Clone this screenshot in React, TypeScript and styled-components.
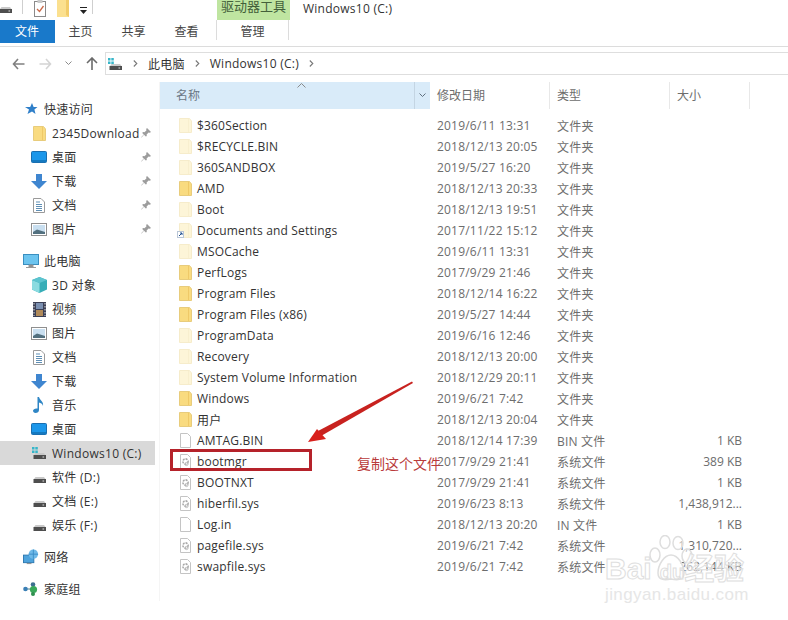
import styled, { createGlobalStyle } from 'styled-components';

const GlobalStyle = createGlobalStyle`
  html, body { margin: 0; padding: 0; background: #fff; }
  body {
    font-family: 'Open Sans', 'Noto Sans CJK SC', sans-serif;
    font-size: 12px;
    color: #333;
  }
`;

const FolderIcon = ({ pale }: { pale?: boolean }) => (
  <svg width="13" height="15" viewBox="0 0 13 15">
    <path d="M0.5 0.5H10.5L12.5 3V14.5H0.5Z" fill={pale ? '#fdf5d8' : '#f9db80'} stroke={pale ? '#f6eccb' : '#e8cc7c'} />
    <path d="M9.5 1V14" stroke={pale ? '#f8efcf' : '#efc968'} />
  </svg>
);

const QuickFolder = () => (
  <svg width="12" height="17" viewBox="0 0 12 17">
    <path d="M0 0H12V17H0Z" fill="#fbe08f" />
    <path d="M9 0V15L12 17V0Z" fill="#f2cc6a" />
  </svg>
);

const PageIcon = ({ gear }: { gear?: boolean }) => (
  <svg width="13" height="15" viewBox="0 0 13 15">
    <path d="M1.5 0.5H8.5L11.5 3.5V14.5H1.5Z" fill="#fff" stroke="#c4c4c4" />
    {gear && <circle cx="6.5" cy="7.5" r="2.6" fill="none" stroke="#a9a9a9" strokeWidth="1.6" strokeDasharray="2 1" />}
    {gear && <circle cx="7.5" cy="10" r="1.6" fill="none" stroke="#bbb" />}
  </svg>
);

const DriveIcon = ({ win }: { win?: boolean }) => (
  <svg width="15" height="14" viewBox="0 0 15 14">
    {win && (
      <g fill="#36b6c9">
        <rect x="0" y="1" width="2.5" height="2.5" />
        <rect x="3.3" y="1" width="2.5" height="2.5" />
        <rect x="0" y="4.5" width="2.5" height="2.5" />
        <rect x="3.3" y="4.5" width="2.5" height="2.5" />
      </g>
    )}
    <path d="M2 9L3.5 7H12L13.5 9Z" fill="#c9c9c9" />
    <rect x="1.5" y="9" width="12.5" height="4" fill="#4e4e4e" />
    <rect x="10.5" y="10.5" width="1.6" height="1" fill="#ddd" />
  </svg>
);

const StarIcon = () => (
  <svg width="14" height="14" viewBox="0 0 14 14">
    <path d="M8 1L9.6 5H13.5L10.4 7.6L11.5 12L8 9.5L3.5 12L5 7.6L1 5H6.2Z" fill="#2f7fc9" />
  </svg>
);

const DesktopIcon = () => (
  <svg width="16" height="12" viewBox="0 0 16 12">
    <rect x="0.5" y="0.5" width="15" height="11" rx="1" fill="#1c97ea" stroke="#1a6fb0" />
    <path d="M1 10H15" stroke="#0f5c96" />
  </svg>
);

const DownloadIcon = () => (
  <svg width="16" height="15" viewBox="0 0 16 15">
    <path d="M5 0H11V7H16L8 15L0 7H5Z" fill="#3f86d0" />
  </svg>
);

const DocIcon = () => (
  <svg width="12" height="15" viewBox="0 0 12 15">
    <path d="M0.5 0.5H8L11.5 4V14.5H0.5Z" fill="#fff" stroke="#9a9a9a" />
    <path d="M3 4H7M3 6.5H9M3 8.5H9M3 10.5H9M3 12.5H9" stroke="#5f8fb5" />
  </svg>
);

const PictureIcon = () => (
  <svg width="16" height="13" viewBox="0 0 16 13">
    <rect x="0.5" y="0.5" width="15" height="12" fill="#fff" stroke="#8f8f8f" />
    <rect x="2" y="2" width="12" height="9" fill="#c9dff0" />
    <path d="M2 9L6 6.5L14 9V11H2Z" fill="#52707f" />
  </svg>
);

const MonitorIcon = () => (
  <svg width="16" height="15" viewBox="0 0 16 15">
    <rect x="0.5" y="0.5" width="15" height="10" fill="#6cc4ef" stroke="#3a8fc0" />
    <path d="M6 11H10V13H6ZM3 13.5H13" fill="#888" stroke="#999" />
  </svg>
);

const CubeIcon = () => (
  <svg width="15" height="16" viewBox="0 0 15 16">
    <path d="M7.5 0L15 3V12.5L7.5 16L0 12.5V3Z" fill="#37aeb8" />
    <path d="M0 3L7.5 6V16L0 12.5Z" fill="#8adbe0" />
    <path d="M7.5 0L15 3L7.5 6L0 3Z" fill="#5cc4cf" />
  </svg>
);

const FilmIcon = () => (
  <svg width="13" height="15" viewBox="0 0 13 15">
    <rect width="13" height="15" fill="#3b3f55" />
    <rect x="3" y="1" width="7" height="6" fill="#7a8fb0" />
    <rect x="3" y="8" width="7" height="6" fill="#b08a5a" />
    <path d="M1 1V14M12 1V14" stroke="#ddd" strokeDasharray="1.5 1.5" />
  </svg>
);

const MusicIcon = () => (
  <svg width="12" height="16" viewBox="0 0 12 16">
    <path d="M4.5 0H6C6.5 3 11 4.5 10 9C9.5 6.5 7.5 6 6 5.5V13C6 15 4.5 16 2.5 16C1 16 0 15 0 13.8C0 12.2 2.5 11 4.5 11.6Z" fill="#2f86c5" />
  </svg>
);

const NetworkIcon = () => (
  <svg width="17" height="16" viewBox="0 0 17 16">
    <rect x="0.5" y="6" width="11" height="8" fill="#4ea3dc" stroke="#2c78b0" />
    <path d="M4 15H9" stroke="#888" />
    <circle cx="11" cy="5" r="5" fill="#6fb9e8" />
    <path d="M11 0V10M6 5H16" stroke="#3d8fc8" />
  </svg>
);

const HomegroupIcon = () => (
  <svg width="16" height="14" viewBox="0 0 16 14">
    <path d="M3 7H10M10 3L10 11" stroke="#4a7f8f" />
    <circle cx="2.5" cy="7" r="2.3" fill="#3a7fb5" />
    <circle cx="10" cy="2.5" r="2.3" fill="#3d6f8f" />
    <circle cx="10.5" cy="7.5" r="3.6" fill="#39a85a" />
    <circle cx="10" cy="12" r="2" fill="#2f8f4f" />
  </svg>
);

const PinIcon = () => (
  <svg width="10" height="10" viewBox="0 0 10 10">
    <path d="M6 0L10 4L8.8 4.8L7.6 4.4L5.6 6.4L5.8 8L4.8 8.6L3 6.8L0.6 9.6L0.2 9.2L2.8 6.6L1.2 5L2 4L3.4 4.2L5.4 2.4L5.2 1Z" fill="#9c9c9c" />
  </svg>
);

const ClipboardIcon = () => (
  <svg width="12" height="17" viewBox="0 0 12 17">
    <rect x="0.5" y="1.5" width="11" height="15" fill="#fff" stroke="#8a8a8a" />
    <rect x="3.5" y="0" width="5" height="3" fill="#c9c9c9" />
    <path d="M3 9L5.5 11.5L9.5 6" fill="none" stroke="#c96a4a" strokeWidth="1.3" />
  </svg>
);

const BackArrow = ({ color, flip }: { color: string; flip?: boolean }) => (
  <svg width="13" height="12" viewBox="0 0 13 12" style={flip ? { transform: 'scaleX(-1)' } : undefined}>
    <path d="M6 1L1.5 6L6 11M2 6H12.5" fill="none" stroke={color} strokeWidth="1.6" />
  </svg>
);

const UpArrow = () => (
  <svg width="12" height="13" viewBox="0 0 12 13">
    <path d="M1 6L6 1L11 6M6 1.5V13" fill="none" stroke="#6b6b6b" strokeWidth="1.6" />
  </svg>
);

const Chevron = ({ color = '#8a8a8a' }: { color?: string }) => (
  <svg width="7" height="5" viewBox="0 0 7 5">
    <path d="M0.5 0.5L3.5 3.5L6.5 0.5" fill="none" stroke={color} />
  </svg>
);

const RightChevron = () => (
  <svg width="5" height="7" viewBox="0 0 5 7">
    <path d="M0.8 0.5L3.8 3.5L0.8 6.5" fill="none" stroke="#777" strokeWidth="1.1" />
  </svg>
);

type NavEntry = { icon: React.ReactNode; label: string; pinned?: boolean; top?: boolean; selected?: boolean };

const navGroups: NavEntry[][] = [
  [
    { icon: <StarIcon />, label: '快速访问', top: true },
    { icon: <FolderIcon />, label: '2345Download', pinned: true },
    { icon: <DesktopIcon />, label: '桌面', pinned: true },
    { icon: <DownloadIcon />, label: '下载', pinned: true },
    { icon: <DocIcon />, label: '文档', pinned: true },
    { icon: <PictureIcon />, label: '图片', pinned: true },
  ],
  [
    { icon: <MonitorIcon />, label: '此电脑', top: true },
    { icon: <CubeIcon />, label: '3D 对象' },
    { icon: <FilmIcon />, label: '视频' },
    { icon: <PictureIcon />, label: '图片' },
    { icon: <DocIcon />, label: '文档' },
    { icon: <DownloadIcon />, label: '下载' },
    { icon: <MusicIcon />, label: '音乐' },
    { icon: <DesktopIcon />, label: '桌面' },
    { icon: <DriveIcon win />, label: 'Windows10 (C:)', selected: true },
    { icon: <DriveIcon />, label: '软件 (D:)' },
    { icon: <DriveIcon />, label: '文档 (E:)' },
    { icon: <DriveIcon />, label: '娱乐 (F:)' },
  ],
  [{ icon: <NetworkIcon />, label: '网络', top: true }],
  [{ icon: <HomegroupIcon />, label: '家庭组', top: true }],
];

type Kind = 'folder' | 'pale' | 'link' | 'blank' | 'sys';
type FileEntry = { name: string; date: string; type: string; size?: string; kind: Kind };

const files: FileEntry[] = [
  { name: '$360Section', date: '2019/6/11 13:31', type: '文件夹', kind: 'pale' },
  { name: '$RECYCLE.BIN', date: '2018/12/13 20:05', type: '文件夹', kind: 'pale' },
  { name: '360SANDBOX', date: '2019/5/27 16:20', type: '文件夹', kind: 'pale' },
  { name: 'AMD', date: '2018/12/13 20:33', type: '文件夹', kind: 'folder' },
  { name: 'Boot', date: '2018/12/13 19:51', type: '文件夹', kind: 'pale' },
  { name: 'Documents and Settings', date: '2017/11/22 15:12', type: '文件夹', kind: 'link' },
  { name: 'MSOCache', date: '2019/6/11 13:31', type: '文件夹', kind: 'pale' },
  { name: 'PerfLogs', date: '2017/9/29 21:46', type: '文件夹', kind: 'folder' },
  { name: 'Program Files', date: '2018/12/14 16:22', type: '文件夹', kind: 'folder' },
  { name: 'Program Files (x86)', date: '2019/5/27 14:44', type: '文件夹', kind: 'folder' },
  { name: 'ProgramData', date: '2019/6/16 12:46', type: '文件夹', kind: 'pale' },
  { name: 'Recovery', date: '2018/12/13 20:00', type: '文件夹', kind: 'pale' },
  { name: 'System Volume Information', date: '2018/12/29 20:11', type: '文件夹', kind: 'pale' },
  { name: 'Windows', date: '2019/6/21 7:42', type: '文件夹', kind: 'folder' },
  { name: '用户', date: '2018/12/13 20:04', type: '文件夹', kind: 'folder' },
  { name: 'AMTAG.BIN', date: '2018/12/14 17:39', type: 'BIN 文件', size: '1 KB', kind: 'blank' },
  { name: 'bootmgr', date: '2017/9/29 21:41', type: '系统文件', size: '389 KB', kind: 'sys' },
  { name: 'BOOTNXT', date: '2017/9/29 21:41', type: '系统文件', size: '1 KB', kind: 'sys' },
  { name: 'hiberfil.sys', date: '2019/6/23 8:13', type: '系统文件', size: '1,438,912...', kind: 'sys' },
  { name: 'Log.in', date: '2018/12/13 20:20', type: 'IN 文件', size: '1 KB', kind: 'blank' },
  { name: 'pagefile.sys', date: '2019/6/21 7:42', type: '系统文件', size: '1,310,720...', kind: 'sys' },
  { name: 'swapfile.sys', date: '2019/6/21 7:42', type: '系统文件', size: '262,144 KB', kind: 'sys' },
];

const fileIcon = (kind: Kind) => {
  if (kind === 'folder') return <FolderIcon />;
  if (kind === 'pale') return <FolderIcon pale />;
  if (kind === 'blank') return <PageIcon />;
  if (kind === 'sys') return <PageIcon gear />;
  return (
    <>
      <FolderIcon pale />
      <LinkBadge width="7" height="7" viewBox="0 0 7 7">
        <rect x="0.5" y="0.5" width="6" height="6" fill="#fff" stroke="#b9c6d6" />
        <path d="M2 5L5 2M3 2H5V4" fill="none" stroke="#1f4f8f" />
      </LinkBadge>
    </>
  );
};

export default function App() {
  return (
    <Page>
      <GlobalStyle />
      <TitleRow>
        <QuickTools>
          <QuickSlot $left={-2}>
            <DriveIcon />
          </QuickSlot>
          <QuickSlot $left={9}>
            <ToolDivider />
          </QuickSlot>
          <QuickSlot $left={11}>
            <ClipboardIcon />
          </QuickSlot>
          <QuickSlot $left={11}>
            <QuickFolder />
          </QuickSlot>
          <QuickSlot $left={11}>
            <QuickMenu>
              <QuickMenuBar />
              <svg width="7" height="4" viewBox="0 0 7 4">
                <path d="M0 0H7L3.5 4Z" fill="#222" />
              </svg>
            </QuickMenu>
          </QuickSlot>
          <QuickSlot $left={5}>
            <ToolDivider />
          </QuickSlot>
        </QuickTools>
        <ContextTitle>驱动器工具</ContextTitle>
        <WindowTitle>Windows10 (C:)</WindowTitle>
      </TitleRow>
      <TabRow>
        <FileTab>文件</FileTab>
        <Tab>主页</Tab>
        <Tab>共享</Tab>
        <Tab>查看</Tab>
        <ManageTab>管理</ManageTab>
      </TabRow>
      <AddressRow>
        <NavButtons>
          <BackArrow color="#808080" />
          <BackArrow color="#d4d4d4" flip />
          <Chevron />
          <UpArrow />
        </NavButtons>
        <AddressBox>
          <DriveIcon win />
          <RightChevron />
          <span>此电脑</span>
          <RightChevron />
          <span>Windows10 (C:)</span>
          <RightChevron />
        </AddressBox>
      </AddressRow>
      <Body>
        <Sidebar>
          {navGroups.map((group, i) => (
            <NavGroup key={i}>
              {group.map((item) => (
                <NavRow key={item.label} $top={item.top} $selected={item.selected}>
                  <NavIcon>{item.icon}</NavIcon>
                  <NavLabel>{item.label}</NavLabel>
                  {item.pinned && <PinIcon />}
                </NavRow>
              ))}
            </NavGroup>
          ))}
        </Sidebar>
        <Main>
          <HeaderRow>
            <NameHeader>
              名称
              <SortCaret>
                <svg width="9" height="5" viewBox="0 0 9 5">
                  <path d="M0.5 4.5L4.5 0.5L8.5 4.5" fill="none" stroke="#8a8a8a" />
                </svg>
              </SortCaret>
              <HeaderDrop>
                <Chevron color="#5f6f7f" />
              </HeaderDrop>
            </NameHeader>
            <ColumnHeader $width={120}>修改日期</ColumnHeader>
            <ColumnHeader $width={120}>类型</ColumnHeader>
            <ColumnHeader $width={80}>大小</ColumnHeader>
          </HeaderRow>
          <FileList>
            {files.map((file) => (
              <FileRow key={file.name}>
                <NameCell>
                  <FileIconSlot>{fileIcon(file.kind)}</FileIconSlot>
                  {file.name}
                </NameCell>
                <MetaCell>{file.date}</MetaCell>
                <MetaCell>{file.type}</MetaCell>
                <SizeCell>{file.size}</SizeCell>
              </FileRow>
            ))}
          </FileList>
        </Main>
      </Body>

      <HighlightBox />
      <ArrowMark width="110" height="66" viewBox="0 0 110 66">
        <path d="M106 1.5L107 3L15 56L12 51Z" fill="#c8221f" />
        <path d="M2 62L11 49L20 59Z" fill="#d8201c" />
      </ArrowMark>
      <Note>复制这个文件</Note>
      <Watermark>
        <WatermarkPaw width="46" height="50" viewBox="0 0 46 50">
          <g fill="rgba(255,255,255,0.55)" stroke="#dedede" strokeWidth="1.5">
            <ellipse cx="7" cy="20" rx="5" ry="7" />
            <ellipse cx="17" cy="7" rx="5" ry="6.5" />
            <ellipse cx="30" cy="8" rx="5" ry="6.5" />
            <ellipse cx="39" cy="21" rx="5" ry="7" />
            <path d="M23 20C30 20 36 30 36 38C36 46 28 45 23 44C18 45 10 46 10 38C10 30 16 20 23 20Z" />
          </g>
        </WatermarkPaw>
        <WatermarkBrand>
          <span>Bai</span>
          <WatermarkSmall>du</WatermarkSmall>
          <span>经验</span>
        </WatermarkBrand>
        <WatermarkUrl>jingyan.baidu.com</WatermarkUrl>
      </Watermark>
    </Page>
  );
}

const Page = styled.div`
  position: relative;
  width: 788px;
  height: 620px;
  overflow: hidden;
  background: #fff;
`;

const TitleRow = styled.div`
  display: flex;
  align-items: flex-start;
  height: 20px;
  overflow: hidden;
`;

const QuickTools = styled.div`
  display: flex;
  align-items: flex-start;
  width: 217px;
  height: 20px;
`;

const QuickSlot = styled.div<{ $left: number }>`
  display: flex;
  margin-left: ${({ $left }) => $left}px;
`;

const ToolDivider = styled.div`
  width: 1px;
  height: 14px;
  background: #cfcfcf;
`;

const QuickMenu = styled.div`
  display: flex;
  flex-direction: column;
  gap: 2px;
  padding-top: 7px;
`;

const QuickMenuBar = styled.div`
  width: 7px;
  height: 1px;
  background: #222;
`;

const ContextTitle = styled.div`
  width: 73px;
  height: 20px;
  background: #bfe5a1;
  color: #43603a;
  text-align: center;
  font-size: 13px;
  line-height: 13px;
`;

const WindowTitle = styled.div`
  margin-left: 13px;
  font-size: 12px;
  line-height: 17px;
  letter-spacing: 0.25px;
`;

const TabRow = styled.div`
  display: flex;
  height: 26px;
  border-bottom: 1px solid #dcdcdc;
`;

const Tab = styled.div`
  width: 53px;
  padding-top: 3px;
  text-align: center;
  line-height: 18px;
  color: #444;
`;

const FileTab = styled.div`
  width: 55px;
  height: 23px;
  margin-right: -1px;
  background: #1979ca;
  color: #fff;
  line-height: 23px;
  text-align: center;
  padding-right: 1px;
  box-sizing: border-box;
`;

const ManageTab = styled.div`
  width: 73px;
  height: 20px;
  margin-left: 3px;
  padding-top: 3px;
  box-sizing: border-box;
  line-height: 18px;
  text-align: center;
  color: #444;
  border-left: 1px solid #dcdcdc;
  border-right: 1px solid #dcdcdc;
`;

const AddressRow = styled.div`
  display: flex;
  height: 23px;
  margin-top: 5px;
`;

const NavButtons = styled.div`
  display: flex;
  align-items: center;
  justify-content: space-between;
  width: 105px;
  padding: 0 7px 0 12px;
  box-sizing: border-box;
`;

const AddressBox = styled.div`
  flex: 1;
  display: flex;
  align-items: center;
  gap: 10px;
  padding-left: 2px;
  border-top: 1px solid #dedede;
  border-bottom: 1px solid #dedede;
  border-left: 1px solid #dedede;
  letter-spacing: 0.25px;
  color: #333;
`;

const Body = styled.div`
  display: flex;
  margin-top: 7px;
`;

const Sidebar = styled.nav`
  width: 160px;
  padding: 15px 4px 0 0;
  box-sizing: border-box;
  border-right: 1px solid #f5f5f5;
  display: flex;
  flex-direction: column;
  gap: 8px;
`;

const NavGroup = styled.div`
  display: flex;
  flex-direction: column;
`;

const NavRow = styled.div<{ $top?: boolean; $selected?: boolean }>`
  display: flex;
  align-items: center;
  height: 24px;
  padding-left: ${({ $top }) => ($top ? '23px' : '31px')};
  background: ${({ $selected }) => ($selected ? '#d9d9d9' : 'transparent')};
  box-sizing: border-box;
`;

const NavIcon = styled.span`
  display: flex;
  justify-content: center;
  align-items: center;
  width: 16px;
  margin-right: 5px;
  flex: none;
`;

const NavLabel = styled.span`
  flex: 1;
  white-space: nowrap;
  letter-spacing: 0.28px;
  color: #333;
  & + svg {
    margin-right: 4px;
  }
`;

const Main = styled.main`
  flex: 1;
  min-width: 0;
`;

const HeaderRow = styled.div`
  display: flex;
  height: 27px;
`;

const NameHeader = styled.div`
  position: relative;
  width: 270px;
  padding-left: 16px;
  box-sizing: border-box;
  background: #d9ebf9;
  color: #6b7785;
  line-height: 27px;
`;

const SortCaret = styled.span`
  position: absolute;
  left: 137px;
  top: 1px;
  line-height: 0;
`;

const HeaderDrop = styled.span`
  position: absolute;
  right: 0;
  top: 0;
  width: 15px;
  height: 27px;
  display: flex;
  align-items: center;
  justify-content: center;
  border-left: 1px solid #c4d5e3;
`;

const ColumnHeader = styled.div<{ $width: number }>`
  width: ${({ $width }) => $width}px;
  padding-left: 7px;
  box-sizing: border-box;
  border-right: 1px solid #e8e8e8;
  color: #6d6d6d;
  line-height: 27px;
`;

const FileList = styled.div`
  display: flex;
  flex-direction: column;
  padding-top: 6px;
`;

const FileRow = styled.div`
  display: grid;
  grid-template-columns: 277px 120px 80px 105px;
  height: 21px;
  align-items: center;
  white-space: nowrap;
`;

const NameCell = styled.div`
  display: flex;
  align-items: center;
  padding-left: 19px;
  letter-spacing: 0.18px;
  color: #333;
`;

const FileIconSlot = styled.span`
  position: relative;
  display: flex;
  justify-content: flex-start;
  width: 13px;
  margin-right: 5px;
`;

const LinkBadge = styled.svg`
  position: absolute;
  left: -2px;
  bottom: 0;
`;

const MetaCell = styled.div`
  color: #6d6d6d;
  letter-spacing: 0.2px;
`;

const SizeCell = styled.div`
  color: #6d6d6d;
  text-align: right;
`;

const HighlightBox = styled.div`
  position: absolute;
  left: 170px;
  top: 449px;
  width: 142px;
  height: 22px;
  box-sizing: border-box;
  border: 3px solid #b5222a;
`;

const ArrowMark = styled.svg`
  position: absolute;
  left: 306px;
  top: 380px;
`;

const Note = styled.div`
  position: absolute;
  left: 357px;
  top: 455px;
  color: #b93a3a;
  font-size: 14px;
  line-height: 18px;
`;

const Watermark = styled.div`
  position: absolute;
  left: 600px;
  top: 535px;
  width: 150px;
  height: 70px;
  color: rgba(255, 255, 255, 0.55);
`;

const WatermarkPaw = styled.svg`
  position: absolute;
  left: 48px;
  top: 0;
`;

const WatermarkBrand = styled.div`
  position: absolute;
  left: 5px;
  top: 18px;
  display: flex;
  align-items: baseline;
  white-space: nowrap;
  font-family: 'Liberation Sans', 'Noto Sans CJK SC', sans-serif;
  font-size: 30px;
  font-weight: 700;
  line-height: 32px;
  -webkit-text-stroke: 1px #dedede;
`;

const WatermarkSmall = styled.span`
  margin: 0 0 0 8px;
  font-size: 20px;
`;

const WatermarkUrl = styled.div`
  position: absolute;
  left: 5px;
  top: 51px;
  font-family: 'Liberation Sans', sans-serif;
  font-size: 17px;
  line-height: 18px;
  letter-spacing: 0.4px;
  color: #e6e6e6;
  white-space: nowrap;
`;
